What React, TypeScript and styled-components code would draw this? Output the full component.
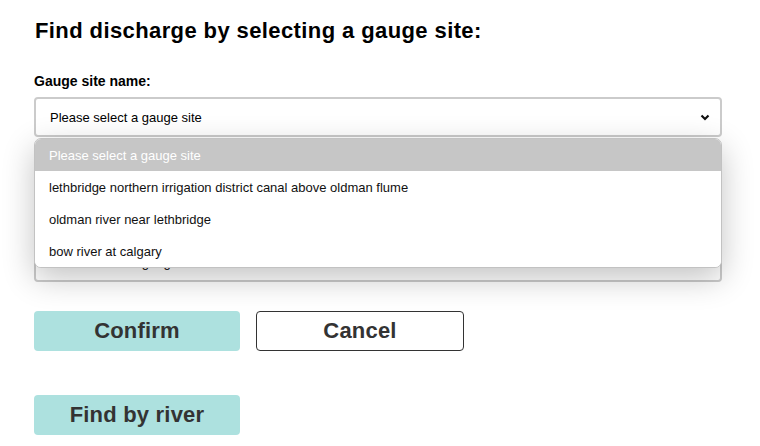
import React from 'react';
import styled, { createGlobalStyle } from 'styled-components';

const GlobalStyle = createGlobalStyle`
  html, body {
    margin: 0;
    padding: 0;
    background: #ffffff;
    font-family: "Liberation Sans", Arial, sans-serif;
  }
`;

const Page = styled.div`
  width: 760px;
  height: 446px;
  box-sizing: border-box;
  padding: 18px 38px 0 34px;
  overflow: hidden;
`;

const Title = styled.h2`
  margin: 0 0 0 1px;
  font-size: 22px;
  line-height: 25px;
  font-weight: 700;
  letter-spacing: 0.4px;
  color: #000;
`;

const Field = styled.div<{ $top: number }>`
  position: relative;
  margin-top: ${p => p.$top}px;
`;

const Label = styled.div`
  font-size: 14px;
  line-height: 15px;
  font-weight: 700;
  color: #000;
  margin-bottom: 8px;
`;

const SelectBox = styled.div`
  height: 40px;
  box-sizing: border-box;
  border: 2px solid #cbcbcb;
  border-radius: 4px;
  padding: 0 10px 0 14px;
  display: flex;
  align-items: center;
  justify-content: space-between;
  font-size: 13px;
  color: #000;
  background: #fff;
`;

const DropList = styled.ul`
  position: absolute;
  left: 0;
  right: 0;
  top: 64px;
  margin: 0;
  padding: 0;
  list-style: none;
  background: #fff;
  border: 1px solid #c2c2c2;
  border-radius: 7px;
  overflow: hidden;
  box-shadow: 0 10px 32px rgba(0, 0, 0, 0.24);
  z-index: 5;
`;

const Option = styled.li<{ $active?: boolean }>`
  height: 32px;
  display: flex;
  align-items: center;
  padding-left: 14px;
  font-size: 13px;
  color: ${p => (p.$active ? '#fff' : '#111')};
  background: ${p => (p.$active ? '#c6c6c6' : '#fff')};
`;

const ButtonRow = styled.div<{ $top: number }>`
  display: flex;
  gap: 16px;
  margin-top: ${p => p.$top}px;
`;

const Button = styled.button<{ $variant: 'primary' | 'outline' }>`
  width: ${p => (p.$variant === 'primary' ? 206 : 208)}px;
  height: 40px;
  box-sizing: border-box;
  border-radius: 4px;
  border: ${p => (p.$variant === 'primary' ? 'none' : '1px solid #333')};
  background: ${p => (p.$variant === 'primary' ? '#ade1df' : '#fff')};
  color: #333;
  font-family: "Liberation Sans", Arial, sans-serif;
  font-size: 22px;
  font-weight: 700;
  letter-spacing: 0.2px;
  padding: 0;
`;

const Chevron = () => (
  <svg width="10" height="7" viewBox="0 0 10 7">
    <path d="M1.5 1.5 L5 5 L8.5 1.5" fill="none" stroke="#111" strokeWidth="2.2" />
  </svg>
);

const sites = [
  'lethbridge northern irrigation district canal above oldman flume',
  'oldman river near lethbridge',
  'bow river at calgary',
];

const App: React.FC = () => {
  return (
    <Page>
      <GlobalStyle />
      <Title>Find discharge by selecting a gauge site:</Title>
      <Field $top={31}>
        <Label>Gauge site name:</Label>
        <SelectBox>
          <span>Please select a gauge site</span>
          <Chevron />
        </SelectBox>
        <DropList>
          <Option $active>Please select a gauge site</Option>
          {sites.map(s => (
            <Option key={s}>{s}</Option>
          ))}
        </DropList>
      </Field>
      <Field $top={82}>
        <Label>Gauge site ID:</Label>
        <SelectBox>
          <span>Please select a gauge site</span>
          <Chevron />
        </SelectBox>
      </Field>
      <ButtonRow $top={29}>
        <Button $variant="primary">Confirm</Button>
        <Button $variant="outline">Cancel</Button>
      </ButtonRow>
      <ButtonRow $top={44}>
        <Button $variant="primary">Find by river</Button>
      </ButtonRow>
    </Page>
  );
};

export default App;
